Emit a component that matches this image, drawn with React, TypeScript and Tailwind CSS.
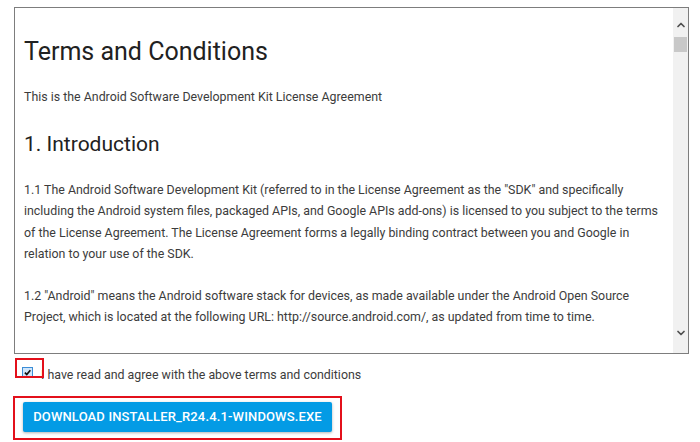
import { ChevronDown, ChevronUp } from "lucide-react";

const paragraphs = [
  '1.1 The Android Software Development Kit (referred to in the License Agreement as the "SDK" and specifically including the Android system files, packaged APIs, and Google APIs add-ons) is licensed to you subject to the terms of the License Agreement. The License Agreement forms a legally binding contract between you and Google in relation to your use of the SDK.',
  '1.2 "Android" means the Android software stack for devices, as made available under the Android Open Source Project, which is located at the following URL: http://source.android.com/, as updated from time to time.',
  '1.3 A "compatible implementation" means any Android device that (i) complies with the Android Compatibility Definition document.',
];

function Scrollbar() {
  return (
    <div className="flex w-[15px] shrink-0 flex-col bg-[#f1f1f1]">
      <div className="flex h-[28px] items-end justify-center pb-[5px]">
        <ChevronUp className="size-[12px] text-[#505050]" strokeWidth={3.5} />
      </div>
      <div className="mx-[1px] mt-[1px] h-[15px] bg-[#c8c8c8]" />
      <div className="flex-1" />
      <div className="flex h-[26px] items-start justify-center">
        <ChevronDown className="size-[12px] text-[#505050]" strokeWidth={3.5} />
      </div>
    </div>
  );
}

export default function App() {
  return (
    <div className="min-h-[442px] bg-white pl-[14px] pr-[11px] pt-[7px] font-['Roboto',sans-serif]">
      <div className="flex h-[347px] border border-[#7d7d7d]">
        <div className="flex-1 overflow-hidden pl-[9px] pr-[3px] pt-[29px] text-[#3c3c3c]">
          <h1 className="text-[25px] leading-[30px] text-[#212121]">Terms and Conditions</h1>
          <p className="mt-[19px] text-[12.4px] leading-[21px]">
            This is the Android Software Development Kit License Agreement
          </p>
          <h2 className="mt-[23px] text-[21px] leading-[28px] text-[#212121]">1. Introduction</h2>
          {paragraphs.map((p) => (
            <p key={p} className="mt-[21px] text-[12.4px] leading-[21.3px]">
              {p}
            </p>
          ))}
        </div>
        <Scrollbar />
      </div>

      <label className="relative mt-[12px] flex h-[12px] items-center gap-[8px] pl-[8px] text-[12.4px] leading-[15px] text-[#3c3c3c]">
        <span className="flex size-[11px] shrink-0 items-center justify-center border border-[#3c8dd6] bg-[#cfe6fb]">
          <svg viewBox="0 0 12 12" className="size-[11px]">
            <path d="M2.5 6.2 L5 8.6 L9.8 3" fill="none" stroke="#111" strokeWidth="2.2" />
          </svg>
        </span>
        <span className="pt-[4px]">I have read and agree with the above terms and conditions</span>
        <span className="absolute left-[1px] top-[-8px] h-[20px] w-[29px] border-2 border-[#e3101b]" />
      </label>

      <div className="-ml-[1px] mt-[18px] h-[44px] w-[329px] border-2 border-[#e3101b] pl-[8px] pt-[4px]">
        <button className="h-[30px] w-[309px] rounded-[2px] bg-[#039be5] text-[13px] font-medium tracking-[0.15px] text-white shadow-[0_1px_3px_rgba(0,0,0,0.3)]">
          DOWNLOAD INSTALLER_R24.4.1-WINDOWS.EXE
        </button>
      </div>
    </div>
  );
}
